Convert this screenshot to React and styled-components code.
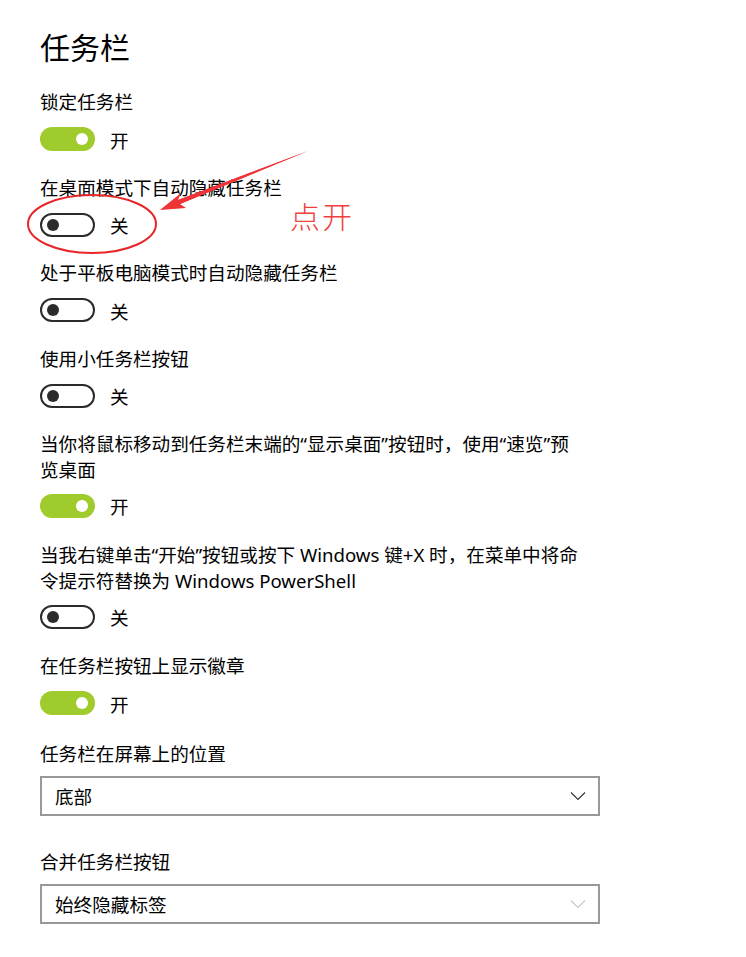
import React from "react";
import styled, { createGlobalStyle } from "styled-components";

const GlobalStyle = createGlobalStyle`
  body {
    margin: 0;
    background: #ffffff;
    font-family: "Noto Sans", "Noto Sans CJK SC", sans-serif;
    color: #000;
  }
`;

const Page = styled.div`
  position: relative;
  width: 746px;
  height: 957px;
  padding: 27px 0 0 40px;
  box-sizing: border-box;
  overflow: hidden;
`;

const Title = styled.h1`
  margin: 1px 0 21px;
  font-size: 30px;
  line-height: 40px;
  font-weight: 400;
`;

const Setting = styled.div`
  display: flex;
  flex-direction: column;
  gap: ${(p) => (p.$multi ? "10.5px" : "12px")};
  margin-bottom: ${(p) => (p.$multi ? "24.5px" : "23.5px")};
`;

const Label = styled.div`
  font-size: 18.6px;
  line-height: 26px;
  white-space: nowrap;
`;

const ToggleRow = styled.div`
  display: flex;
  align-items: center;
  gap: 15px;
  height: 24px;
  font-size: 18.6px;
`;

const Track = styled.div`
  width: 55px;
  height: 24px;
  box-sizing: border-box;
  border-radius: 12px;
  display: flex;
  align-items: center;
  justify-content: ${(p) => (p.$on ? "flex-end" : "flex-start")};
  padding: 0 ${(p) => (p.$on ? "7px" : "5px")};
  background: ${(p) => (p.$on ? "#9fcb2c" : "#fff")};
  border: ${(p) => (p.$on ? "none" : "2px solid #2b2b2b")};
`;

const Knob = styled.div`
  width: 12px;
  height: 12px;
  border-radius: 50%;
  background: ${(p) => (p.$on ? "#fff" : "#2b2b2b")};
`;

const SelectLabel = styled(Label)`
  margin-top: ${(p) => p.$mt || "0"};
  margin-bottom: 9px;
`;

const Select = styled.div`
  width: 560px;
  height: 40px;
  box-sizing: border-box;
  border: 2px solid #999;
  display: flex;
  align-items: center;
  justify-content: space-between;
  padding: 0 12px 0 13px;
  font-size: 18.6px;
  margin-bottom: ${(p) => p.$mb || "0"};
`;

const Annotation = styled.svg`
  position: absolute;
  left: 0;
  top: 0;
  pointer-events: none;
`;

const Note = styled.div`
  position: absolute;
  left: 290px;
  top: 193px;
  color: #f2403e;
  font-family: "Noto Sans CJK SC", sans-serif;
  font-size: 30px;
  font-weight: 300;
  letter-spacing: 2px;
`;

function Toggle({ on }) {
  return (
    <ToggleRow>
      <Track $on={on}>
        <Knob $on={on} />
      </Track>
      <span>{on ? "开" : "关"}</span>
    </ToggleRow>
  );
}

function Chevron({ color }) {
  return (
    <svg width="16" height="10" viewBox="0 0 16 10">
      <path d="M1 1.5 L8 8.5 L15 1.5" fill="none" stroke={color} strokeWidth="1.1" />
    </svg>
  );
}

const settings = [
  { label: ["锁定任务栏"], on: true },
  { label: ["在桌面模式下自动隐藏任务栏"], on: false },
  { label: ["处于平板电脑模式时自动隐藏任务栏"], on: false },
  { label: ["使用小任务栏按钮"], on: false },
  {
    label: ["当你将鼠标移动到任务栏末端的“显示桌面”按钮时，使用“速览”预", "览桌面"],
    on: true,
  },
  {
    label: [
      "当我右键单击“开始”按钮或按下 Windows 键+X 时，在菜单中将命",
      "令提示符替换为 Windows PowerShell",
    ],
    on: false,
  },
  { label: ["在任务栏按钮上显示徽章"], on: true },
];

export default function App() {
  return (
    <>
      <GlobalStyle />
      <Page>
        <Title>任务栏</Title>
        {settings.map((s, i) => (
          <Setting key={i} $multi={s.label.length > 1}>
            <Label>
              {s.label.map((l, j) => (
                <div key={j}>{l}</div>
              ))}
            </Label>
            <Toggle on={s.on} />
          </Setting>
        ))}
        <SelectLabel $mt="25.5px">任务栏在屏幕上的位置</SelectLabel>
        <Select $mb="33px">
          <span>底部</span>
          <Chevron color="#333" />
        </Select>
        <SelectLabel>合并任务栏按钮</SelectLabel>
        <Select>
          <span>始终隐藏标签</span>
          <Chevron color="#c8c8c8" />
        </Select>

        <Annotation width="746" height="957" viewBox="0 0 746 957">
          <ellipse cx="92" cy="224" rx="64" ry="29" fill="none" stroke="#e8262a" strokeWidth="2" />
          <path d="M308 151 L178 200 L181 193 L160 210 L186 208 L180 204 Z" fill="#ef3437" />
          <path d="M308 151 L180 204 L178 200 Z" fill="#ef3437" />
        </Annotation>
        <Note>点开</Note>
      </Page>
    </>
  );
}
